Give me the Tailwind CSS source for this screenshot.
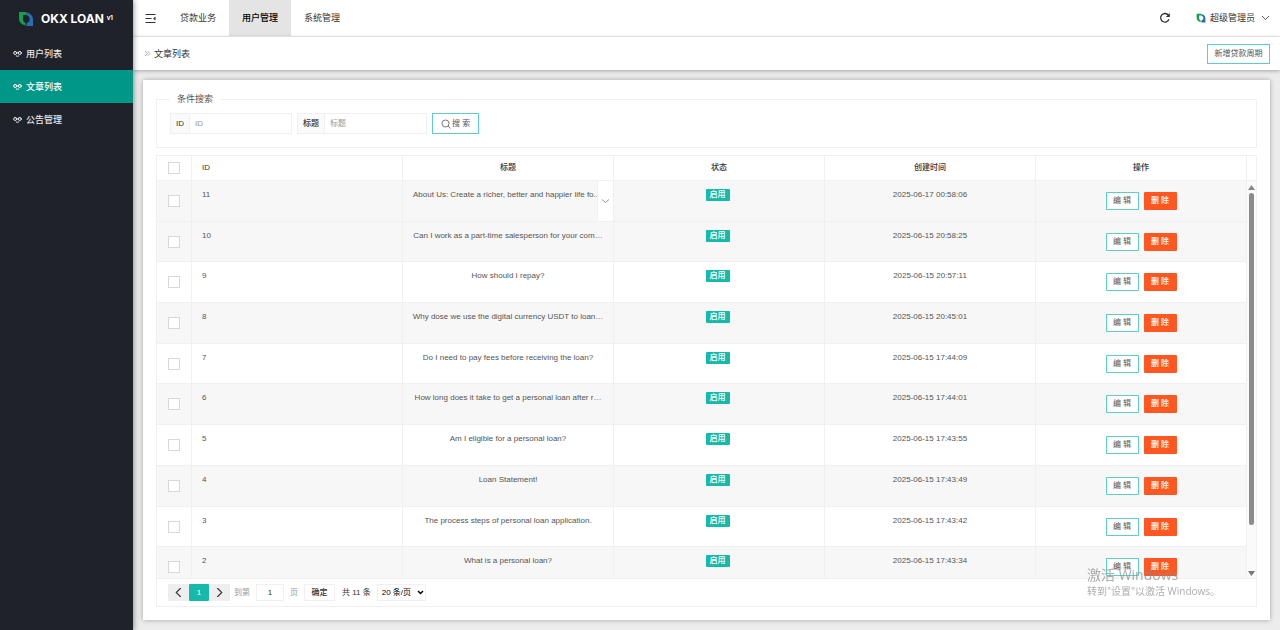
<!DOCTYPE html>
<html lang="zh-CN">

<head>
    <meta charset="UTF-8">
    <meta name="viewport" content="width=device-width, initial-scale=1.0">
    <script src="https://cdn.jsdelivr.net/npm/@tailwindcss/browser@4"></script>
    <title>OKX LOAN</title>
</head>

<body class="flex h-screen overflow-hidden bg-[#ececec] font-['Liberation_Sans','Noto_Sans_CJK_SC',sans-serif] text-[8px] leading-3 text-[#555]">
    <svg class="hidden">
        <symbol id="knot" viewBox="0 0 9 8">
            <g fill="none" stroke="currentColor" stroke-width="1" stroke-linecap="round">
                <circle cx="2.200" cy="3" r="1.500" />
                <circle cx="6.800" cy="3" r="1.500" />
                <path d="M2.200 1.500C3.600 1.500 3.800 3 4.500 3S5.400 1.500 6.800 1.500M3.200 6Q4.500 6.900 5.800 6" />
            </g>
        </symbol>
        <symbol id="logo" viewBox="0 0 16 16">
            <path fill="#12a04a" d="M1 1h7.500v3H5v4.500c0 1.500.8 2.500 2.500 3.500v2.500C3.500 13.500 1 11 1 7.500z" />
            <path fill="#2a6ebb" d="M8.500 1.500C12.500 2 15 5 15 8.500V15H8.500v-2.500L11.500 10V7.500c0-1.500-1-2.500-3-3.500z" />
        </symbol>
    </svg>

    <!-- side menu -->
    <aside class="z-20 w-[133px] shrink-0 bg-[#20222a] text-[#e8e8e9] shadow-[1px_0_5px_rgba(0,0,0,0.4)]">
        <div class="flex h-[37px] items-center pl-[18px]">
            <svg class="size-4"><use href="#logo" /></svg>
            <h1 class="ml-[7px] whitespace-nowrap font-['Inter',sans-serif] text-[12px] font-bold text-white">OKX LOAN <sup class="text-[6px]">v1</sup></h1>
        </div>
        <nav class="text-[9px] font-medium">
            <a href="#" class="flex h-[33px] items-center gap-1 pl-[13px]"><svg class="h-2 w-[9px]"><use href="#knot" /></svg>用户列表</a>
            <a href="#" class="flex h-[33px] items-center gap-1 bg-[#009688] pl-[13px] text-white"><svg class="h-2 w-[9px]"><use href="#knot" /></svg>文章列表</a>
            <a href="#" class="flex h-[33px] items-center gap-1 pl-[13px]"><svg class="h-2 w-[9px]"><use href="#knot" /></svg>公告管理</a>
        </nav>
    </aside>

    <div class="flex min-w-0 flex-1 flex-col">
        <header class="flex h-[37px] shrink-0 items-center border-b border-[#f2f2f2] bg-white text-[9px] text-[#333]">
            <button type="button" aria-label="菜单" class="mx-[12px]">
                <svg class="size-[11px]" viewBox="0 0 11 11" fill="none" stroke="currentColor" stroke-width="1.200">
                    <path d="M.5 1.500h10M.5 5.500h6M.5 9.500h10" />
                    <path fill="currentColor" stroke="none" d="M10.500 3.500v4L8 5.500z" />
                </svg>
            </button>
            <nav class="-ml-px flex h-full">
                <a href="#" class="flex items-center px-[13px]">贷款业务</a>
                <a href="#" class="flex items-center bg-[#e4e4e4] px-[13px] font-medium text-black">用户管理</a>
                <a href="#" class="flex items-center px-[13px]">系统管理</a>
            </nav>
            <button type="button" aria-label="刷新" class="ml-auto">
                <svg class="size-3" viewBox="0 0 12 12" fill="none" stroke="currentColor" stroke-width="1.300">
                    <path d="M10 7.300A4.300 4.300 0 1 1 9.400 3.200" />
                    <path fill="currentColor" stroke="none" d="M10.800 1v4H6.800z" />
                </svg>
            </button>
            <button type="button" class="ml-[25px] mr-[10px] flex items-center gap-1">
                <svg class="size-[10px]"><use href="#logo" /></svg>
                超级管理员
                <svg class="ml-[2px] h-2 w-[9px]" viewBox="0 0 9 8" fill="none" stroke="currentColor" stroke-width=".8"><path d="M1 2l3.500 3.500L8 2" /></svg>
            </button>
        </header>

        <div class="z-10 flex h-[33px] shrink-0 items-center bg-white pl-[11px] pr-[10px] shadow-[0_1px_4px_rgba(0,0,0,0.3)]">
            <svg class="mr-[3px] size-[7px] text-[#999]" viewBox="0 0 7 7" fill="none" stroke="currentColor" stroke-width=".8"><path d="M1 1l2.500 2.500L1 6M3.500 1L6 3.500L3.500 6" /></svg>
            <span class="text-[9px] text-[#333]">文章列表</span>
            <button type="button" class="ml-auto h-5 w-[63px] border border-[#16baaa]/70">新增贷款周期</button>
        </div>

        <main class="m-[10px] flex min-h-0 flex-1 flex-col bg-white p-[13px] shadow-[0_0_5px_rgba(0,0,0,0.3)]">
            <form>
                <fieldset class="h-[55px] border border-[#f0f0f0] px-[13px]">
                    <legend class="px-[7px] text-[9px]">条件搜索</legend>
                    <div class="flex gap-[5px] pt-[8px]">
                        <div class="flex h-[21px] border border-[#f0f0f0]">
                            <label for="sid" class="flex items-center border-r border-[#f0f0f0] bg-[#fafafa] px-[5px] font-medium text-[#333]">ID</label>
                            <input id="sid" type="text" placeholder="ID" class="w-[101px] px-[5px] outline-none placeholder:text-[#999]">
                        </div>
                        <div class="flex h-[21px] border border-[#f0f0f0]">
                            <label for="stitle" class="flex items-center border-r border-[#f0f0f0] bg-[#fafafa] px-[5px] font-medium text-[#333]">标题</label>
                            <input id="stitle" type="text" placeholder="标题" class="w-[101px] px-[5px] outline-none placeholder:text-[#999]">
                        </div>
                        <button type="button" class="flex h-[21px] items-center border border-[#16baaa]/70 px-2">
                            <svg class="mr-px size-[10px]" viewBox="0 0 10 10" fill="none" stroke="currentColor" stroke-width=".8"><circle cx="4.500" cy="4.500" r="3.500" /><path d="M7 7l2.500 2.500" /></svg>
                            搜 索
                        </button>
                    </div>
                </fieldset>
            </form>

            <section class="mt-[7px] flex min-h-0 flex-1 flex-col border border-[#f0f0f0]">
                <div class="flex min-h-0 flex-1">
                    <div class="min-w-0 flex-1 overflow-hidden">
                        <table class="h-[432px] w-full table-fixed border-separate border-spacing-0">
                            <thead>
                                <tr class="h-[25px] text-[#333] *:border-b *:border-r *:border-[#f0f0f0] *:p-0 *:font-medium">
                                    <th class="w-[35px]"><input type="checkbox" aria-label="全选" class="mx-auto block size-3 appearance-none border border-[#d8d8d8] bg-white"></th>
                                    <th><div class="px-[10px] text-left">ID</div></th>
                                    <th>标题</th>
                                    <th>状态</th>
                                    <th>创建时间</th>
                                    <th>操作</th>
                                </tr>
                            </thead>
                            <tbody id="rows"></tbody>
                        </table>
                    </div>
                    <!-- scroll track -->
                    <div class="flex w-[9px] shrink-0 flex-col items-center">
                        <div class="h-[25px] w-full border-b border-[#f0f0f0]"></div>
                        <div class="flex min-h-0 w-full flex-1 flex-col items-center bg-[#fafafa] pb-[2px] pt-[4px]">
                            <svg class="h-[5px] w-[7px] shrink-0" viewBox="0 0 7 5"><path fill="#888" d="M3.500 0L7 5H0z" /></svg>
                            <div class="mt-[3px] h-[85%] w-[5px] rounded-full bg-[#8b8b8b]"></div>
                            <svg class="mt-auto h-[5px] w-[7px] shrink-0" viewBox="0 0 7 5"><path fill="#777" d="M3.500 5L7 0H0z" /></svg>
                        </div>
                    </div>
                </div>

                <div class="flex h-7 shrink-0 items-center border-t border-[#f0f0f0] pl-[11px] text-[#333]">
                    <button type="button" aria-label="上一页" class="flex h-[17px] w-[21px] items-center justify-center bg-[#eee]">
                        <svg class="size-[9px]" viewBox="0 0 8 8" fill="none" stroke="currentColor"><path d="M6 0L2 4l4 4" /></svg>
                    </button>
                    <button type="button" class="h-[17px] w-5 rounded-[1px] bg-[#16baaa] text-white">1</button>
                    <button type="button" aria-label="下一页" class="flex h-[17px] w-[21px] items-center justify-center bg-[#eee]">
                        <svg class="size-[9px]" viewBox="0 0 8 8" fill="none" stroke="currentColor"><path d="M2 0l4 4l-4 4" /></svg>
                    </button>
                    <label for="page" class="ml-1 text-[#999]">到第</label>
                    <input id="page" type="text" value="1" class="mx-[6px] h-[17px] w-7 border border-[#f0f0f0] text-center">
                    <span class="text-[#999]">页</span>
                    <button type="button" class="ml-[6px] h-[17px] w-[31px] border border-[#f0f0f0] font-medium">确定</button>
                    <span class="ml-[7px]">共 11 条</span>
                    <div class="relative ml-[6px]">
                        <select aria-label="每页条数" class="h-[17px] w-[49px] appearance-none border border-[#f0f0f0] pl-1 text-black">
                            <option>20 条/页</option>
                        </select>
                        <svg class="pointer-events-none absolute right-[2px] top-[6px] h-[5px] w-[7px]" viewBox="0 0 7 5" fill="none" stroke="#000" stroke-width="1.500"><path d="M1 1l2.500 2.500L6 1" /></svg>
                    </div>
                </div>
            </section>
        </main>
    </div>

    <div class="pointer-events-none fixed bottom-[31px] right-[58px] z-30 w-[135px] whitespace-nowrap font-['Open_Sans','Noto_Sans_CJK_SC',sans-serif] text-[#8a8a8a]/70">
        <p class="text-[14px] leading-4">激活 Windows</p>
        <p class="text-[10px] leading-4">转到"设置"以激活 Windows。</p>
    </div>

    <script>
        const articles = [
            [11, "About Us: Create a richer, better and happier life fo..", "2025-06-17 00:58:06"],
            [10, "Can I work as a part-time salesperson for your com…", "2025-06-15 20:58:25"],
            [9, "How should I repay?", "2025-06-15 20:57:11"],
            [8, "Why dose we use the digital currency USDT to loan…", "2025-06-15 20:45:01"],
            [7, "Do I need to pay fees before receiving the loan?", "2025-06-15 17:44:09"],
            [6, "How long does it take to get a personal loan after r…", "2025-06-15 17:44:01"],
            [5, "Am I eligible for a personal loan?", "2025-06-15 17:43:55"],
            [4, "Loan Statement!", "2025-06-15 17:43:49"],
            [3, "The process steps of personal loan application.", "2025-06-15 17:43:42"],
            [2, "What is a personal loan?", "2025-06-15 17:43:34"],
        ];

        // first row is hovered and shows the expand handle of its long title
        const handle = `<button type="button" aria-label="展开" class="absolute inset-y-0 right-0 flex w-4 items-center justify-center border-l border-[#f0f0f0] bg-white text-[#888]">
            <svg class="h-2 w-[9px]" viewBox="0 0 9 8" fill="none" stroke="currentColor" stroke-width=".9"><path d="M1 2.500l3.500 3L8 2.500" /></svg>
        </button>`;

        document.getElementById("rows").innerHTML = articles.map(([id, title, time], i) => `
            <tr class="first:bg-[#f7f7f7] even:bg-[#f7f7f7] *:border-b *:border-r *:border-[#f0f0f0] *:p-0 *:align-top">
                <td><input type="checkbox" aria-label="${id}" class="mx-auto mt-[14px] block size-3 appearance-none border border-[#d8d8d8] bg-white"></td>
                <td><div class="px-[10px] pt-2">${id}</div></td>
                <td class="relative"><div class="whitespace-nowrap pt-2 ${i === 0 ? "pl-[10px] text-left" : "text-center"}">${title}</div>${i === 0 ? handle : ""}</td>
                <td><div class="flex justify-center pr-[3px] pt-2"><span class="rounded-[1px] bg-[#16baaa] px-1 font-medium text-white">启用</span></div></td>
                <td><div class="pt-2 text-center">${time}</div></td>
                <td><div class="flex justify-center gap-[5px] pt-[11px]">
                    <button type="button" class="h-[18px] w-[33px] rounded-[1px] border border-[#16baaa]/70 bg-white">编 辑</button>
                    <button type="button" class="h-[18px] w-[33px] rounded-[1px] bg-[#ff5722] font-medium text-white">删 除</button>
                </div></td>
            </tr>`).join("");
    </script>
</body>

</html>
